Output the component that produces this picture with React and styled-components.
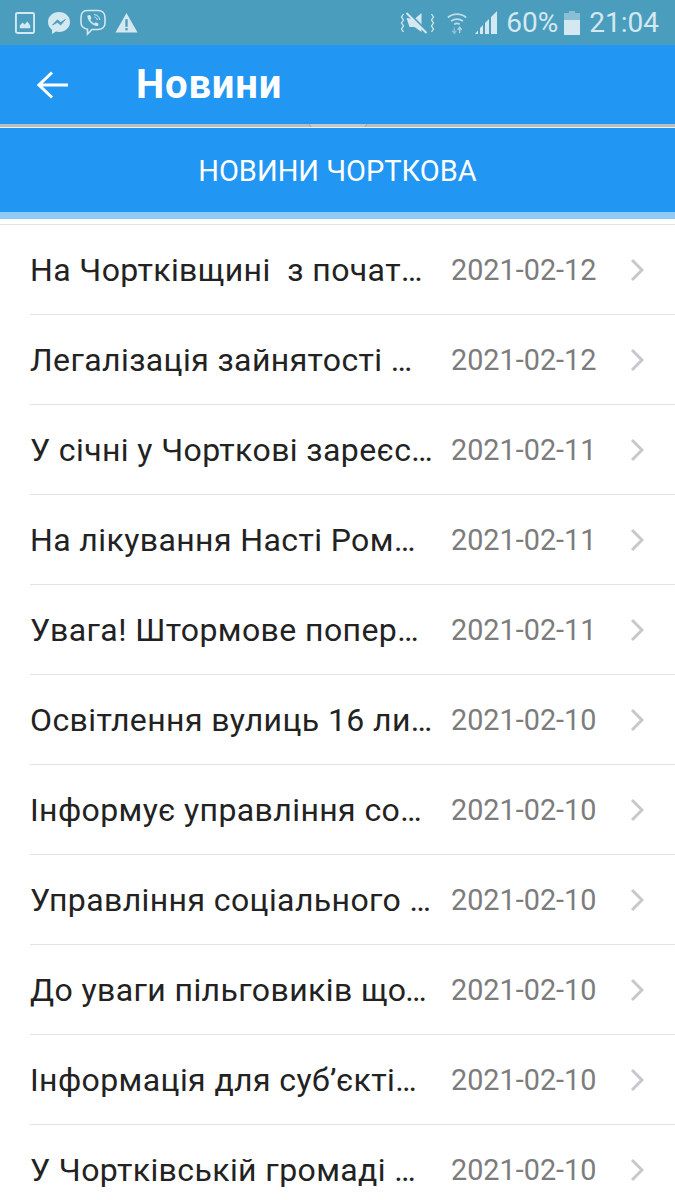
import React from 'react';
import styled, { createGlobalStyle } from 'styled-components';

const GlobalStyle = createGlobalStyle`
  html, body {
    margin: 0;
    padding: 0;
    background: #fff;
    font-family: Roboto, "Noto Sans", sans-serif;
  }
`;

const Page = styled.div`
  width: 675px;
  height: 1200px;
  overflow: hidden;
  background: #fff;
`;

const StatusBar = styled.div`
  height: 45px;
  background: #4b9dbd;
  display: flex;
  align-items: center;
  justify-content: space-between;
  padding: 0 16px 0 15px;
  box-sizing: border-box;
  color: #d3e8f0;
`;

const StatusGroup = styled.div`
  display: flex;
  align-items: center;
`;

const StatusItem = styled.span`
  display: flex;
  align-items: center;
  margin-left: ${(p) => p.$left || 0}px;
  font-size: 28px;
  line-height: 45px;
`;

const Header = styled.div`
  height: 79px;
  background: #2196f3;
  display: flex;
  align-items: center;
  padding-left: 37px;
  color: #fff;
`;

const HeaderTitle = styled.h1`
  margin: 0 0 0 68px;
  font-size: 40px;
  font-weight: 700;
  letter-spacing: 0.8px;
  line-height: 79px;
`;

const Divider = styled.div`
  height: 4px;
  background: #bdbdbd;
  border-bottom: 1px solid #e8f2fb;
  box-sizing: border-box;
  display: flex;
  justify-content: center;
`;

const Tab = styled.div`
  height: 84px;
  background: #2196f3;
  border-bottom: 7px solid #90caf9;
  box-sizing: content-box;
  color: #fff;
  font-size: 29px;
  text-align: center;
  line-height: 87px;
`;

const List = styled.div`
  margin-top: 5px;
  border-top: 1px solid #e4e4e4;
`;

const Row = styled.div`
  height: 90px;
  margin-left: 30px;
  box-sizing: border-box;
  border-bottom: 1px solid #e2e2e2;
  display: flex;
  align-items: center;
`;

const Title = styled.div`
  width: 405px;
  flex: none;
  font-size: 32px;
  color: #222;
  letter-spacing: 0.4px;
  white-space: pre;
  overflow: hidden;
  text-overflow: ellipsis;
`;

const DateText = styled.div`
  margin-left: 16px;
  width: 145px;
  flex: none;
  font-size: 28.8px;
  color: #7c7c7c;
  white-space: nowrap;
`;

const Chevron = styled.svg`
  margin-left: 34px;
  flex: none;
`;

const news = [
  ['На Чортківщині  з початку року', '2021-02-12'],
  ['Легалізація зайнятості — запорука', '2021-02-12'],
  ['У січні у Чорткові зареєстровано', '2021-02-11'],
  ['На лікування Насті Ромщук', '2021-02-11'],
  ['Увага! Штормове попередження', '2021-02-11'],
  ['Освітлення вулиць 16 листопада', '2021-02-10'],
  ['Інформує управління соціального', '2021-02-10'],
  ['Управління соціального захисту', '2021-02-10'],
  ['До уваги пільговиків щодо оплати', '2021-02-10'],
  ['Інформація для суб’єктів бізнесу', '2021-02-10'],
  ['У Чортківській громаді — вакцинація', '2021-02-10'],
];

const ImageIcon = () => (
  <svg width="20" height="22" viewBox="0 0 21 23">
    <rect x="1" y="1" width="19" height="21" rx="1.5" fill="none" stroke="currentColor" strokeWidth="2" />
    <path d="M5 17 L5 14 L8 11 L10 13 L13 10 L16 14 L16 17 Z" fill="currentColor" />
  </svg>
);

const MessengerIcon = () => (
  <svg width="24" height="24" viewBox="0 0 24 24">
    <path d="M12 1 C5.5 1 1 5.5 1 11 C1 14.5 2.7 17 5 18.7 L5 23 L9 20.6 C10 20.9 11 21 12 21 C18.5 21 23 16.5 23 11 C23 5.5 18.5 1 12 1 Z" fill="currentColor" />
    <path d="M5.5 14 L10.5 8.8 L13.5 11.6 L18.5 8.4 L13.6 14 L10.6 11.3 Z" fill="#4b9dbd" stroke="#4b9dbd" strokeWidth="0.8" />
  </svg>
);

const ViberIcon = () => (
  <svg width="26" height="27" viewBox="0 0 26 27" fill="none" stroke="currentColor">
    <path d="M7 1.5 H18 C22 1.5 25 4 25 8.5 V14 C25 18 22 20.5 18 20.5 H12 L7.5 25 V20.2 C3.5 19.5 1 17.5 1 13.5 V8.5 C1 4 3.5 1.5 7 1.5 Z" strokeWidth="1.6" />
    <path d="M7.5 6.5 L10 6 L11.5 9 L10.3 10.5 C11 12.3 12.5 13.8 14.3 14.6 L15.8 13.2 L18.6 14.8 L18 17 C14 18 6.5 11.5 7.5 6.5 Z" fill="currentColor" stroke="none" />
    <path d="M14 5.5 C17 5.7 19.5 8 19.8 11 M14.5 8 C16 8.2 17.2 9.3 17.4 11" strokeWidth="1" />
  </svg>
);

const WarningIcon = () => (
  <svg width="23" height="22" viewBox="0 0 24 22">
    <path d="M12 0.5 L23.5 21 H0.5 Z" fill="currentColor" />
    <rect x="10.8" y="7" width="2.4" height="8" fill="#4b9dbd" />
    <rect x="10.8" y="16.3" width="2.4" height="2.4" fill="#4b9dbd" />
  </svg>
);

const MuteIcon = () => (
  <svg width="35" height="24" viewBox="0 0 34 24" fill="none" stroke="currentColor">
    <path d="M6 7 L14 8 L21 2 V21 L14 16 L9 16 Z" fill="currentColor" stroke="none" />
    <path d="M7 1 L27 21" strokeWidth="2.4" stroke="#4b9dbd" />
    <path d="M6 2 L26 22" strokeWidth="2" />
    <path d="M3 3 L1 6 L3 9 L1 12 L3 15 L1 18 L3 21" strokeWidth="1.3" />
    <path d="M31 3 L33 6 L31 9 L33 12 L31 15 L33 18 L31 21" strokeWidth="1.3" />
  </svg>
);

const WifiIcon = () => (
  <svg width="20" height="24" viewBox="0 0 22 24" fill="none" stroke="currentColor" strokeWidth="2">
    <path d="M1 6 C6.5 1 15.5 1 21 6" opacity="0.85" />
    <path d="M4.5 10 C8 7 14 7 17.5 10" opacity="0.85" />
    <path d="M8 13.5 C9.8 12.2 12.2 12.2 14 13.5" opacity="0.85" />
    <path d="M8 17 V23 M5.8 20.5 L8 23.5 L10.2 20.5" strokeWidth="1.5" opacity="0.45" />
    <path d="M14 23 V17 M11.8 19.5 L14 16.5 L16.2 19.5" strokeWidth="1.5" opacity="0.75" />
  </svg>
);

const SignalIcon = () => (
  <svg width="22" height="23" viewBox="0 0 22 23">
    <path d="M0 23 L3 19.5 V23 Z M5 17 L8 14 V23 H5 Z M10 12 L14 8 V23 H10 Z M16 6 L22 0 V23 H16 Z" fill="currentColor" />
  </svg>
);

const BatteryIcon = () => (
  <svg width="16" height="24" viewBox="0 0 16 24">
    <path d="M5 0 H11 V2 H16 V24 H0 V2 H5 Z" fill="currentColor" opacity="0.45" />
    <rect x="0" y="9" width="16" height="15" fill="currentColor" />
  </svg>
);

const App = () => (
  <Page>
    <GlobalStyle />
    <StatusBar>
      <StatusGroup>
        <StatusItem><ImageIcon /></StatusItem>
        <StatusItem $left={12}><MessengerIcon /></StatusItem>
        <StatusItem $left={9}><ViberIcon /></StatusItem>
        <StatusItem $left={9}><WarningIcon /></StatusItem>
      </StatusGroup>
      <StatusGroup>
        <StatusItem><MuteIcon /></StatusItem>
        <StatusItem $left={12}><WifiIcon /></StatusItem>
        <StatusItem $left={8}><SignalIcon /></StatusItem>
        <StatusItem $left={9}>60%</StatusItem>
        <StatusItem $left={6}><BatteryIcon /></StatusItem>
        <StatusItem $left={9}>21:04</StatusItem>
      </StatusGroup>
    </StatusBar>
    <Header>
      <svg width="31" height="28" viewBox="0 0 31 28" fill="none" stroke="#fff" strokeWidth="3">
        <path d="M31 14 H2 M15 1.5 L2 14 L15 26.5" />
      </svg>
      <HeaderTitle>Новини</HeaderTitle>
    </Header>
    <Divider>
      <svg width="60" height="3" viewBox="0 0 60 3">
        <path d="M0 0 H60 L58 3 H2 Z" fill="#c6c6c6" />
        <path d="M1 0 L3 3 M59 0 L57 3" stroke="#9a9ea2" strokeWidth="1" />
      </svg>
    </Divider>
    <Tab>НОВИНИ ЧОРТКОВА</Tab>
    <List>
      {news.map(([title, date]) => (
        <Row key={title}>
          <Title>{title}</Title>
          <DateText>{date}</DateText>
          <Chevron width="14" height="24" viewBox="0 0 14 24" fill="none" stroke="#c8c8cc" strokeWidth="3">
            <path d="M2 2 L12 12 L2 22" />
          </Chevron>
        </Row>
      ))}
    </List>
  </Page>
);

export default App;
